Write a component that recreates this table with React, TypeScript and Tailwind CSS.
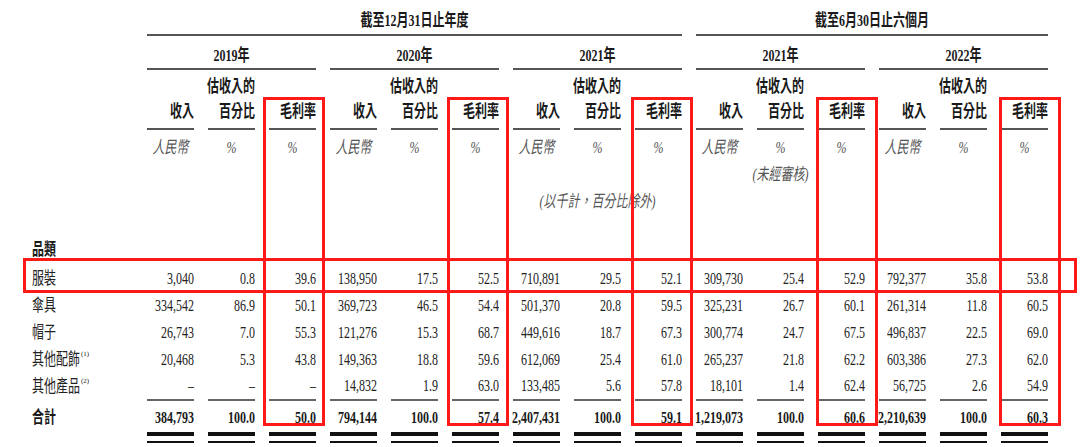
import React from 'react';

type Row = { label: string; sup?: string; values: string[] };

const rows: Row[] = [
  { label: '服裝', values: ['3,040', '0.8', '39.6', '138,950', '17.5', '52.5', '710,891', '29.5', '52.1', '309,730', '25.4', '52.9', '792,377', '35.8', '53.8'] },
  { label: '傘具', values: ['334,542', '86.9', '50.1', '369,723', '46.5', '54.4', '501,370', '20.8', '59.5', '325,231', '26.7', '60.1', '261,314', '11.8', '60.5'] },
  { label: '帽子', values: ['26,743', '7.0', '55.3', '121,276', '15.3', '68.7', '449,616', '18.7', '67.3', '300,774', '24.7', '67.5', '496,837', '22.5', '69.0'] },
  { label: '其他配飾', sup: '(1)', values: ['20,468', '5.3', '43.8', '149,363', '18.8', '59.6', '612,069', '25.4', '61.0', '265,237', '21.8', '62.2', '603,386', '27.3', '62.0'] },
  { label: '其他產品', sup: '(2)', values: ['–', '–', '–', '14,832', '1.9', '63.0', '133,485', '5.6', '57.8', '18,101', '1.4', '62.4', '56,725', '2.6', '54.9'] },
];

const totals = ['384,793', '100.0', '50.0', '794,144', '100.0', '57.4', '2,407,431', '100.0', '59.1', '1,219,073', '100.0', '60.6', '2,210,639', '100.0', '60.3'];

const years = ['2019年', '2020年', '2021年', '2021年', '2022年'];
const redBoxLefts = [263, 447, 631, 816, 999];

const grid = 'grid grid-cols-[133px_repeat(15,47px)] gap-x-[14px]';

// the source image is stretched vertically, so text is scaled to match
const T: React.FC<{ children: React.ReactNode; className?: string }> = ({ children, className = '' }) => (
  <span className={`inline-block scale-y-[1.4] whitespace-nowrap ${className}`}>{children}</span>
);

const App: React.FC = () => {
  const cols = Array.from({ length: 15 }, (_, i) => i);

  return (
    <div className="relative w-[1080px] h-[447px] overflow-hidden bg-white text-[12px] text-[#1a1a1a] font-['Liberation_Serif','Noto_Sans_CJK_TC',serif]">
      {/* period titles */}
      <div className={grid}>
        <div />
        <div className="col-span-9 h-[36px] pt-[6px] flex items-center justify-center border-b-2 border-[#555] font-bold">
          <T>截至12月31日止年度</T>
        </div>
        <div className="col-span-6 h-[36px] pt-[6px] flex items-center justify-center border-b-2 border-[#555] font-bold">
          <T>截至6月30日止六個月</T>
        </div>
      </div>

      {/* years */}
      <div className={grid}>
        <div />
        {years.map((y, i) => (
          <div key={i} className="col-span-3 h-[34px] pt-[6px] flex items-center justify-center border-b-2 border-[#555] font-bold">
            <T>{y}</T>
          </div>
        ))}
      </div>

      {/* column headers */}
      <div className={grid}>
        <div />
        {cols.map((i) => (
          <div key={i} className="h-[60px] pb-[3px] flex flex-col justify-end items-end leading-[25px] border-b-2 border-[#555] font-bold">
            {i % 3 === 0 && <T>收入</T>}
            {i % 3 === 1 && (
              <>
                <T>估收入的</T>
                <T>百分比</T>
              </>
            )}
            {i % 3 === 2 && <T>毛利率</T>}
          </div>
        ))}
      </div>

      {/* units */}
      <div className={grid}>
        <div />
        {cols.map((i) => (
          <div key={i} className="h-[30px] pt-[4px] flex items-center justify-center italic text-[#555]">
            <T>{i % 3 === 0 ? '人民幣' : '%'}</T>
          </div>
        ))}
      </div>

      {/* unaudited note */}
      <div className={grid}>
        <div className="col-start-12 h-[27px] flex items-center justify-center italic text-[#555]">
          <T>(未經審核)</T>
        </div>
      </div>

      {/* unit note */}
      <div className={grid}>
        <div className="col-start-8 col-span-3 h-[27px] flex items-center justify-center italic text-[#555]">
          <T>(以千計，百分比除外)</T>
        </div>
      </div>

      {/* category heading */}
      <div className="h-[50px] flex items-end pl-[32px] leading-[27px] font-bold">
        <T>品類</T>
      </div>

      {/* data rows */}
      {rows.map((r, ri) => (
        <div key={r.label} className={grid}>
          <div className="h-[27px] pl-[32px] flex items-center text-[#222]">
            <T>{r.label}</T>
            {r.sup && <span className="text-[7px] leading-none self-start mt-[6px] ml-[1px]">{r.sup}</span>}
          </div>
          {r.values.map((v, i) => (
            <div
              key={i}
              className={`h-[27px] flex items-center justify-end text-[#222] ${ri === rows.length - 1 ? 'border-b-2 border-[#666] h-[29px] pb-[2px]' : ''}`}
            >
              <T>{v}</T>
            </div>
          ))}
        </div>
      ))}

      {/* total */}
      <div className={grid}>
        <div className="h-[31px] pl-[32px] flex items-center font-bold">
          <T>合計</T>
        </div>
        {totals.map((v, i) => (
          <div key={i} className="h-[31px] flex items-center justify-end font-bold">
            <T>{v}</T>
          </div>
        ))}
      </div>
      <div className={grid}>
        <div />
        {cols.map((i) => (
          <div key={i} className="h-[11px] border-t-4 border-b-2 border-[#111]" />
        ))}
      </div>

      {/* red annotation boxes */}
      {redBoxLefts.map((l) => (
        <div key={l} className="absolute top-[97px] h-[329px] w-[62px] border-[3px] border-[#ff1a1a]" style={{ left: l }} />
      ))}
      <div className="absolute left-[23px] top-[258px] w-[1054px] h-[35px] border-[3px] border-[#ff1a1a]" />
    </div>
  );
};

export default App;
